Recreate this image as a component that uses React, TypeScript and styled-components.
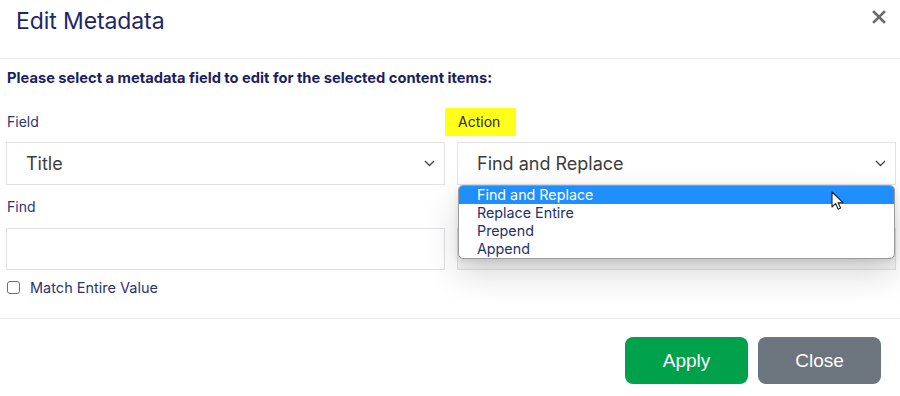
import React from 'react'
import styled, { createGlobalStyle } from 'styled-components'

const GlobalStyle = createGlobalStyle`
    html, body {
        margin: 0;
        padding: 0;
        background: #fff;
    }
    body {
        font-family: Inter, "Noto Sans", sans-serif;
    }
`

const S = {
    Modal: styled.div`
        width: 900px;
        height: 396px;
        display: flex;
        flex-direction: column;
        background: #fff;
        overflow: hidden;
    `,
    Header: styled.div`
        height: 52px;
        border-bottom: 1px solid #e9e9ec;
        display: flex;
        justify-content: space-between;
        align-items: flex-start;
        padding: 6px 14px 0 16px;
        box-sizing: content-box;
    `,
    Title: styled.h1`
        margin: 0;
        font-size: 23px;
        line-height: 30px;
        font-weight: 400;
        color: #1d2767;
        letter-spacing: -0.1px;
    `,
    CloseX: styled.button`
        border: none;
        background: none;
        padding: 0;
        margin-top: 4px;
        width: 14px;
        height: 14px;
        display: flex;
        cursor: pointer;
    `,
    Body: styled.div`
        flex: 1;
        padding: 9px 4px 0 6px;
        border-bottom: 1px solid #ececee;
    `,
    Instruction: styled.p`
        margin: 0 0 20px 1px;
        font-size: 14.7px;
        line-height: 20px;
        font-weight: 700;
        color: #1b2160;
    `,
    Grid: styled.div`
        display: grid;
        grid-template-columns: 439px 439px;
        column-gap: 12px;
    `,
    Column: styled.div`
        position: relative;
        display: flex;
        flex-direction: column;
    `,
    Label: styled.label<{ $highlight?: boolean }>`
        display: block;
        align-self: flex-start;
        height: 28px;
        line-height: 28px;
        font-size: 14px;
        color: ${p => (p.$highlight ? '#2a2a20' : '#2c3370')};
        background: ${p => (p.$highlight ? '#ffff1a' : 'transparent')};
        padding: ${p => (p.$highlight ? '0 16px 0 13px' : '0 0 0 1px')};
        margin: ${p => (p.$highlight ? '0 0 0 -12px' : '0')};
    `,
    Select: styled.div`
        margin-top: 6px;
        height: 43px;
        box-sizing: border-box;
        border: 1px solid #e1e2e6;
        display: flex;
        align-items: center;
        justify-content: space-between;
        padding: 0 9px 0 19px;
        font-size: 18px;
        color: #3d3d3d;
        background: #fff;
    `,
    Input: styled.div<{ $disabled?: boolean }>`
        margin-top: 7px;
        height: 42px;
        box-sizing: border-box;
        border: 1px solid #e1e2e6;
        background: ${p => (p.$disabled ? '#f4f4f5' : '#fff')};
    `,
    FieldLabel: styled.label`
        display: block;
        margin-top: 8px;
        height: 28px;
        line-height: 28px;
        font-size: 14px;
        color: #2c3370;
        padding-left: 1px;
    `,
    CheckRow: styled.div`
        margin-top: 10px;
        display: flex;
        align-items: center;
        gap: 10px;
        padding-left: 1px;
        height: 14px;
    `,
    Checkbox: styled.span`
        width: 13px;
        height: 13px;
        box-sizing: border-box;
        border: 1px solid #6f6f6f;
        border-radius: 3px;
        background: #fff;
    `,
    CheckLabel: styled.span`
        font-size: 14.5px;
        color: #2c3370;
    `,
    Dropdown: styled.ul`
        position: absolute;
        top: 77px;
        left: 1px;
        right: 1px;
        margin: 0;
        padding: 0;
        list-style: none;
        background: #fff;
        border: 1px solid #9c9c9c;
        border-radius: 5px;
        overflow: hidden;
        box-shadow: 0 14px 34px rgba(0, 0, 0, 0.16), 0 2px 6px rgba(0, 0, 0, 0.1);
    `,
    Option: styled.li<{ $active?: boolean }>`
        height: 18px;
        line-height: 18px;
        padding-left: 18px;
        font-size: 14.3px;
        color: ${p => (p.$active ? '#fff' : '#27306c')};
        background: ${p => (p.$active ? '#1e8ffd' : 'transparent')};
    `,
    Pointer: styled.svg`
        position: absolute;
        top: 83px;
        left: 374px;
    `,
    Footer: styled.div`
        height: 77px;
        display: flex;
        justify-content: flex-end;
        align-items: flex-start;
        gap: 10px;
        padding: 18px 19px 0 0;
        box-sizing: border-box;
    `,
    Button: styled.button<{ $variant: 'primary' | 'secondary' }>`
        width: 123px;
        height: 47px;
        border: none;
        border-radius: 8px;
        font-family: "Liberation Sans", Arial, sans-serif;
        font-size: 19px;
        color: #fff;
        background: ${p => (p.$variant === 'primary' ? '#00a14b' : '#6c757d')};
        cursor: pointer;
    `
}

const Chevron = () => (
    <svg width="11" height="7" viewBox="0 0 11 7" fill="none">
        <path d="M1 1l4.5 4.5L10 1" stroke="#444" strokeWidth="1.3" />
    </svg>
)

const App = () => {
    const actions = ['Find and Replace', 'Replace Entire', 'Prepend', 'Append']
    return <S.Modal>
        <GlobalStyle />
        <S.Header>
            <S.Title>Edit Metadata</S.Title>
            <S.CloseX aria-label="Close">
                <svg width="14" height="14" viewBox="0 0 14 14">
                    <path d="M2 2l10 10M12 2L2 12" stroke="#6a6a6a" strokeWidth="2.6" strokeLinecap="square" />
                </svg>
            </S.CloseX>
        </S.Header>
        <S.Body>
            <S.Instruction>Please select a metadata field to edit for the selected content items:</S.Instruction>
            <S.Grid>
                <S.Column>
                    <S.Label>Field</S.Label>
                    <S.Select>Title <Chevron /></S.Select>
                    <S.FieldLabel>Find</S.FieldLabel>
                    <S.Input />
                    <S.CheckRow>
                        <S.Checkbox />
                        <S.CheckLabel>Match Entire Value</S.CheckLabel>
                    </S.CheckRow>
                </S.Column>
                <S.Column>
                    <S.Label $highlight>Action</S.Label>
                    <S.Select>Find and Replace <Chevron /></S.Select>
                    <S.FieldLabel />
                    <S.Input $disabled />
                    <S.Dropdown>
                        {actions.map((a, i) => <S.Option key={a} $active={i === 0}>{a}</S.Option>)}
                    </S.Dropdown>
                    <S.Pointer width="14" height="20" viewBox="0 0 14 20">
                        <path d="M1 1v15l3.6-3.4 2.6 5.6 2.4-1.1-2.5-5.4H12z" fill="#fff" stroke="#222" strokeWidth="1.1" strokeLinejoin="round" />
                    </S.Pointer>
                </S.Column>
            </S.Grid>
        </S.Body>
        <S.Footer>
            <S.Button $variant="primary">Apply</S.Button>
            <S.Button $variant="secondary">Close</S.Button>
        </S.Footer>
    </S.Modal>
}

export default App
